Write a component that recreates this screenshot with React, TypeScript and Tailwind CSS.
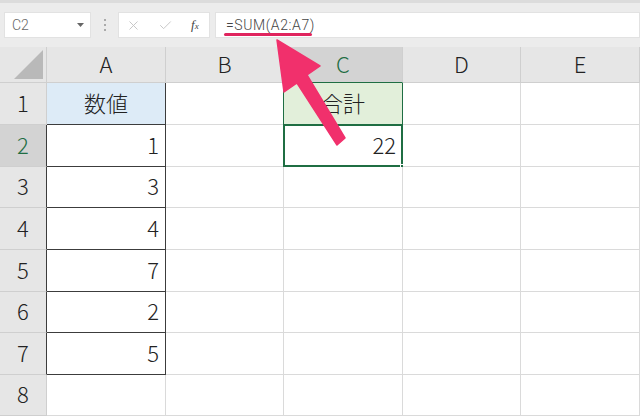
import { X, Check } from 'lucide-react'

const COLS = ['A', 'B', 'C', 'D', 'E']
const WIDTHS = ['w-[119px]', 'w-[118px]', 'w-[119px]', 'w-[118px]', 'w-[119px]']
const HEIGHTS = ['h-[42px]', 'h-[42px]', 'h-[41px]', 'h-[42px]', 'h-[42px]', 'h-[41px]', 'h-[42px]', 'h-[41px]']

const values: Record<string, string> = {
  A1: '数値', A2: '1', A3: '3', A4: '4', A5: '7', A6: '2', A7: '5',
  C1: '合計', C2: '22',
}

function cellClass(col: string, row: number) {
  let c = 'border-b border-r border-[#dadada] bg-white'
  if (col === 'A' && row <= 7) c = 'border-b border-r border-[#3c3c3c] bg-white'
  if (col === 'A' && row === 1) c = 'border-b border-r border-[#3c3c3c] bg-[#ddebf7]'
  if (col === 'B' && row <= 2) c = 'border-b border-r border-[#dadada] border-r-[#1f6e43] bg-white'
  if (col === 'C' && row === 1) c = 'border-b border-r border-[#1f6e43] bg-[#e2efda]'
  if (col === 'C' && row === 2) c = 'border-b border-r border-[#1f6e43] bg-white'
  return c
}

function Cell({ col, row, w }: { col: string; row: number; w: string }) {
  const v = values[col + row]
  const isText = row === 1
  return (
    <div
      className={`${w} h-full shrink-0 relative flex items-center pb-[4px] ${isText ? 'justify-center' : 'justify-end pr-[6px]'} ${cellClass(col, row)}`}
    >
      {v && <span className="text-[22px] font-light text-[#222] leading-none">{v}</span>}
      {col === 'C' && row === 2 && (
        <>
          <div className="absolute -left-px -top-px -right-px -bottom-px border-2 border-[#1f6e43] pointer-events-none" />
          <div className="absolute -right-[4px] -bottom-[4px] w-[6px] h-[6px] bg-[#1f6e43] border border-white" />
        </>
      )}
    </div>
  )
}

export default function App() {
  return (
    <div
      className="w-[640px] h-[416px] overflow-hidden bg-white relative"
      style={{ fontFamily: '"Noto Sans CJK JP", "Noto Sans", sans-serif' }}
    >
      {/* FORMULA BAR */}
      <div className="h-[47px] bg-[#ececec] border-t-[3px] border-[#dcdcdc] flex items-center pl-[4px]">
        <div className="w-[87px] h-[26px] bg-white flex items-center justify-between pl-[7px] pr-[6px] border border-[#e2e2e2]">
          <span className="text-[14px] font-light text-[#666]" style={{ fontFamily: 'Roboto, sans-serif' }}>C2</span>
          <svg width="7" height="4" viewBox="0 0 7 4"><path d="M0 0h7L3.5 4z" fill="#666" /></svg>
        </div>
        <div className="w-[27px] flex flex-col items-center gap-[3px]">
          <div className="w-[2px] h-[2px] bg-[#aaa]" />
          <div className="w-[2px] h-[2px] bg-[#aaa]" />
          <div className="w-[2px] h-[2px] bg-[#aaa]" />
        </div>
        <div className="w-[92px] h-[26px] bg-white flex items-center pl-[7px] border border-[#e2e2e2]">
          <X className="w-[15px] h-[15px] text-[#c4c4c4]" strokeWidth={1.5} />
          <Check className="w-[15px] h-[15px] text-[#c4c4c4] ml-[17px]" strokeWidth={1.5} />
          <span className="text-[13px] italic text-[#444] ml-[18px]" style={{ fontFamily: '"Liberation Serif", serif' }}>
            f<span className="text-[9px]">x</span>
          </span>
        </div>
        <div className="flex-1 h-[26px] ml-[5px] bg-white flex items-center pl-[10px] border border-[#e2e2e2] relative">
          <span className="text-[14px] font-light text-[#444] tracking-[0.6px]" style={{ fontFamily: 'Roboto, sans-serif' }}>=SUM(A2:A7)</span>
          <div className="absolute left-[8px] top-[20px] w-[88px] h-[3px] bg-[#e0245e] rounded-full" />
        </div>
      </div>

      {/* COLUMN HEADERS */}
      <div className="flex h-[36px]">
        <div className="w-[47px] shrink-0 bg-[#e6e6e6] border-r border-b border-[#cfcfcf] flex items-end justify-end pr-[3px] pb-[3px]">
          <svg width="29" height="29" viewBox="0 0 29 29"><path d="M29 0V29H0z" fill="#b9b9b9" /></svg>
        </div>
        {COLS.map((c, i) => (
          <div
            key={c}
            className={`${WIDTHS[i]} shrink-0 flex items-center justify-center pb-[4px] border-r border-[#cfcfcf] ${c === 'C' ? 'bg-[#d3d3d3] border-b border-b-[#1f6e43]' : 'bg-[#e6e6e6] border-b border-b-[#cfcfcf]'}`}
          >
            <span className={`text-[22px] font-light leading-none ${c === 'C' ? 'text-[#1f6e43]' : 'text-[#222]'}`}>{c}</span>
          </div>
        ))}
      </div>

      {/* ROWS */}
      {HEIGHTS.map((h, r) => {
        const row = r + 1
        return (
          <div key={row} className={`flex ${h}`}>
            <div
              className={`w-[47px] shrink-0 flex items-center justify-center pb-[4px] border-b border-[#cfcfcf] border-r ${row >= 2 && row <= 7 ? 'border-r-[#3c3c3c]' : 'border-r-[#cfcfcf]'} ${row === 2 ? 'bg-[#d3d3d3]' : 'bg-[#e6e6e6]'}`}
            >
              <span className={`text-[22px] font-light leading-none ${row === 2 ? 'text-[#1f6e43]' : 'text-[#222]'}`}>{row}</span>
            </div>
            {COLS.map((c, i) => (
              <Cell key={c} col={c} row={row} w={WIDTHS[i]} />
            ))}
          </div>
        )
      })}

      {/* ARROW */}
      <svg className="absolute left-0 top-0 pointer-events-none" width="640" height="416" viewBox="0 0 640 416">
        <path
          d="M277 40 L320 66 L307 75 L345 138 L337 145 L297 83 L284 92 Z"
          fill="#f1306c"
          stroke="#f1306c"
          strokeWidth="1.5"
          strokeLinejoin="round"
        />
      </svg>
    </div>
  )
}
